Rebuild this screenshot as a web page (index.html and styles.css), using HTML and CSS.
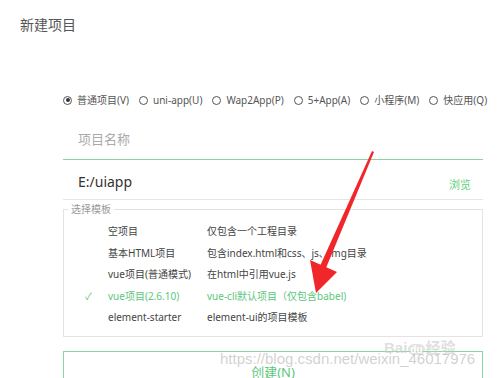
FILE: index.html
```html
<!DOCTYPE html>
<html>
    <head>
        <meta charset="UTF-8">
        <title>新建项目</title>
        <link rel="stylesheet" href="styles.css">
    </head>
    <body>
        <div class="titulo">新建项目</div>

        <div class="formulario">
            <div class="tipos">
                <label class="tipo"><span class="radio activo"></span>普通项目(V)</label>
                <label class="tipo"><span class="radio"></span>uni-app(U)</label>
                <label class="tipo"><span class="radio"></span>Wap2App(P)</label>
                <label class="tipo"><span class="radio"></span>5+App(A)</label>
                <label class="tipo"><span class="radio"></span>小程序(M)</label>
                <label class="tipo"><span class="radio"></span>快应用(Q)</label>
            </div>

            <div class="campo nombre">项目名称</div>

            <div class="campo ruta">
                <span class="rutaTexto">E:/uiapp</span>
                <span class="navegar">浏览</span>
            </div>

            <fieldset class="plantillas">
                <legend>选择模板</legend>
                <div class="fila"><span class="check"></span><span>空项目</span><span>仅包含一个工程目录</span></div>
                <div class="fila"><span class="check"></span><span>基本HTML项目</span><span>包含index.html和css、js、img目录</span></div>
                <div class="fila"><span class="check"></span><span>vue项目(普通模式)</span><span>在html中引用vue.js</span></div>
                <div class="fila elegida"><span class="check">✓</span><span>vue项目(2.6.10)</span><span>vue-cli默认项目（仅包含babel)</span></div>
                <div class="fila"><span class="check"></span><span>element-starter</span><span>element-ui的项目模板</span></div>
            </fieldset>

            <div class="crear">创建(N)</div>
        </div>

        <!-- flecha roja y marcas de agua encima de la captura -->
        <svg class="flecha" width="500" height="378" viewBox="0 0 500 378">
            <polygon points="372,151 374,152 326,268 320,266" fill="#f0262a"/>
            <polygon points="316,293 310,260 337,272" fill="#f0262a"/>
        </svg>
        <div class="marcaBaidu">Bai<span class="pata">du</span>经验</div>
        <div class="marcaUrl">https://blog.csdn.net/weixin_46017976</div>
    </body>
</html>
```

FILE: styles.css
```css
body {
    margin: 0;
    background-color: white;
    font-family: "Noto Sans", "Noto Sans CJK SC", sans-serif;
    color: #444;
    overflow: hidden;
}

.titulo {
    height: 50px;
    line-height: 50px;
    padding-left: 20px;
    font-size: 14px;
    color: #555;
}

.formulario {
    width: 420px;
    margin-left: 63px;
}

.tipos {
    display: flex;
    gap: 10px;
    height: 20px;
    margin-top: 40px;
    font-size: 10px;
    line-height: 20px;
    color: #555;
    white-space: nowrap;
}

.tipo {
    display: flex;
    flex-shrink: 0;
    align-items: center;
    gap: 5px;
}

.radio {
    width: 7px;
    height: 7px;
    border: 1px solid #555;
    border-radius: 50%;
    display: flex;
    align-items: center;
    justify-content: center;
}

.radio.activo::after {
    content: "";
    width: 4px;
    height: 4px;
    border-radius: 50%;
    background-color: #333;
}

.campo {
    padding-left: 15px;
}

.nombre {
    padding-top: 19px;
    padding-bottom: 10px;
    line-height: 20px;
    font-size: 13px;
    color: #aaa;
    border-bottom: 1px solid #8fd29f;
}

.ruta {
    display: flex;
    justify-content: space-between;
    align-items: flex-end;
    padding-top: 12px;
    padding-bottom: 7px;
    border-bottom: 1px solid #e6e6e6;
}

.rutaTexto {
    font-size: 14px;
    line-height: 20px;
    color: #333;
}

.navegar {
    font-size: 11px;
    line-height: 14px;
    margin-right: 12px;
    color: #5fcf80;
}

.plantillas {
    margin: 3px 0 0 0;
    padding: 6px 0 7px 0;
    border: 1px solid #e3e3e3;
}

.plantillas legend {
    margin-left: 4px;
    padding: 0 3px;
    font-size: 10px;
    line-height: 12px;
    color: #999;
}

.fila {
    display: grid;
    grid-template-columns: 44px 99px 1fr;
    height: 21.5px;
    line-height: 21.5px;
    font-size: 10px;
    color: #444;
    white-space: nowrap;
}

.check {
    padding-left: 21px;
}

.elegida {
    color: #5cc67c;
}

.crear {
    margin-top: 14px;
    height: 44px;
    padding-top: 10px;
    line-height: 20px;
    border: 1px solid #8ad99c;
    text-align: center;
    font-size: 13px;
    color: #5cc67c;
}

.flecha {
    position: absolute;
    left: 0;
    top: 0;
}

.marcaBaidu {
    position: absolute;
    left: 384px;
    top: 336px;
    font-family: "Liberation Sans", "Noto Sans CJK SC", sans-serif;
    font-size: 15px;
    font-weight: bold;
    color: rgba(200, 200, 200, 0.6);
}

.pata {
    display: inline-block;
    margin: 0 1px;
    padding: 0 2px;
    font-size: 10px;
    border-radius: 6px;
    background-color: rgba(200, 200, 200, 0.5);
    color: white;
}

.marcaUrl {
    position: absolute;
    left: 220px;
    top: 350px;
    font-family: "Liberation Sans", sans-serif;
    font-size: 15px;
    color: rgba(170, 170, 170, 0.55);
}
```
